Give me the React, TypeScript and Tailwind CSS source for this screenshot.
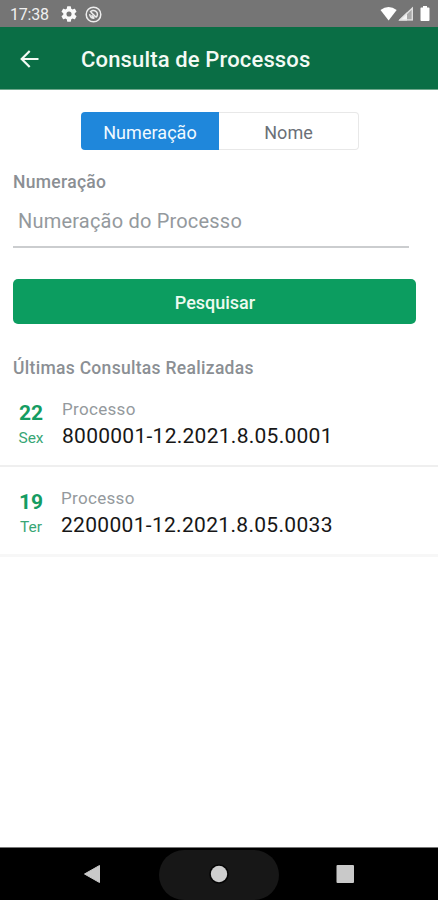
import React from 'react';

type Query = { day: string; weekday: string; number: string; textClass: string; numberClass: string; rowClass: string };

const queries: Query[] = [
  { day: '22', weekday: 'Sex', number: '8000001-12.2021.8.05.0001', textClass: 'ml-[14px]', numberClass: 'tracking-[0.27px]', rowClass: 'h-[78px] border-b-2 border-[#efefef] pt-[9px]' },
  { day: '19', weekday: 'Ter', number: '2200001-12.2021.8.05.0033', textClass: 'ml-[13px]', numberClass: 'tracking-[0.31px]', rowClass: 'h-[90px] border-b-[3px] border-[#f7f7f7] pt-[20px]' },
];

function StatusBar() {
  return (
    <div className="flex h-[27px] shrink-0 items-center bg-[#757575] pt-px text-[#f0f0f0]">
      <span className="ml-[10px] w-[51px] pt-px text-[16px] leading-[26px] tracking-[-0.2px]">17:38</span>
      <svg width="16" height="16" viewBox="2 2 20 20" fill="#fafafa">
        <path d="M19.14 12.94c.04-.3.06-.61.06-.94s-.02-.64-.07-.94l2.03-1.58a.49.49 0 0 0 .12-.61l-1.92-3.32a.49.49 0 0 0-.59-.22l-2.39.96a7 7 0 0 0-1.62-.94l-.36-2.54a.48.48 0 0 0-.48-.41h-3.84a.48.48 0 0 0-.47.41l-.36 2.54c-.59.24-1.13.57-1.62.94l-2.39-.96a.48.48 0 0 0-.59.22L2.74 8.87a.48.48 0 0 0 .12.61l2.03 1.58a6 6 0 0 0 0 1.88l-2.03 1.58a.49.49 0 0 0-.12.61l1.92 3.32c.12.22.37.29.59.22l2.39-.96c.5.38 1.03.7 1.62.94l.36 2.54c.05.24.24.41.48.41h3.84c.24 0 .44-.17.47-.41l.36-2.54c.59-.24 1.13-.56 1.62-.94l2.39.96c.22.08.47 0 .59-.22l1.92-3.32a.48.48 0 0 0-.12-.61zM12 15.2a3.2 3.2 0 1 1 0-6.4 3.2 3.2 0 0 1 0 6.4z" />
      </svg>
      <svg className="ml-2" width="17" height="17" viewBox="0 0 17 17" fill="none" stroke="#ededed">
        <circle cx="8.5" cy="8.5" r="7.3" strokeWidth="1.5" />
        <path d="M5.2 6.2c1-1.8 3.8-2.4 5.7-.9 2 1.6 2 4.5.2 6M4.6 8.2c.3 2.8 2.2 4.2 4.9 3.9M5.8 6l5.3 5.2M6.5 9.2l2.5 2.4" strokeWidth="1.5" />
      </svg>
      <svg className="ml-auto mr-[8px]" width="50" height="16" viewBox="0 0 50 16">
        <path d="M0.5 4Q8.5-2 16.7 4L8.6 14.5Z" fill="#fff" />
        <path d="M18.5 14.5L33 0.5V14.5Z" fill="#a9a9a9" />
        <path d="M18.5 14.5L27 6.3V14.5Z" fill="#f4f4f4" />
        <path d="M20.2 13.8L32.3 2.2V13.8Z" fill="none" stroke="#e2e2e2" strokeWidth="1.3" />
        <path d="M40.5 2.2Q40.5 1.5 41.3 1.5H43V0h4v1.5h1.7q.8 0 .8.7V14q0 1-.8 1h-7.4q-.8 0-.8-1Z" fill="#fff" />
      </svg>
    </div>
  );
}

export default function App() {
  return (
    <div className="flex h-[900px] w-[438px] flex-col overflow-hidden bg-white font-[Roboto,sans-serif]">
      <StatusBar />
      <header className="flex h-[63px] shrink-0 items-center border-b border-[#6fa88c] bg-[#0a6e45] pt-[4px] text-[#f3faf4]">
        <svg className="ml-[20px] mb-[3px]" width="19" height="18" viewBox="0 0 19 18" fill="none" stroke="currentColor" strokeWidth="2.2">
          <path d="M18.5 9H2M9.7 1L1.7 9L9.7 17" />
        </svg>
        <h1 className="ml-[42px] whitespace-nowrap text-[22px] font-medium leading-[28px] tracking-[0.15px]">Consulta de Processos</h1>
      </header>

      <main className="flex flex-1 flex-col pt-[22px]">
        <div className="ml-[81px] flex h-[38px] w-[278px] text-[18px]">
          <button className="w-[138px] rounded-l-[4px] bg-[#1f87db] pt-[2px] tracking-[0.05px] text-[#f1faff]">Numeração</button>
          <button className="flex-1 rounded-r-[4px] border border-l-0 border-[#e8e8e8] bg-white pt-[2px] text-[#6b7077]">Nome</button>
        </div>

        <label className="ml-[13px] mt-[20px] text-[17.5px] font-medium leading-[24px] tracking-[0.3px] text-[#8b8f94]">Numeração</label>
        <div className="ml-[13px] mt-[13px] h-[41px] w-[396px] border-b-2 border-[#cbcdcf] pl-[5px] text-[20px] leading-[28px] tracking-[0.2px] text-[#94999d]">Numeração do Processo</div>

        <button className="ml-[13px] mt-[31px] h-[45px] w-[403px] shrink-0 rounded-[5px] bg-[#0c9d60] pl-px pt-[2px] text-[18px] font-medium text-[#ecfaf0]">Pesquisar</button>

        <h2 className="ml-[13px] mt-[32px] text-[17.5px] font-medium leading-[24px] tracking-[0.3px] text-[#8b8f94]">Últimas Consultas Realizadas</h2>
        <div className="mt-[9px]">
          {queries.map((q) => (
            <div key={q.day} className={`flex ${q.rowClass}`}>
              <div className="ml-[14px] w-[34px] pt-px text-center">
                <div className="text-[21px] font-bold leading-[28px] text-[#159c62]">{q.day}</div>
                <div className="text-[15.5px] leading-[22px] text-[#38a675]">{q.weekday}</div>
              </div>
              <div className={q.textClass}>
                <div className="-mt-px text-[17px] leading-[24px] tracking-[0.32px] text-[#94999d]">Processo</div>
                <div className={`pt-px text-[21px] leading-[28px] text-[#171717] ${q.numberClass}`}>{q.number}</div>
              </div>
            </div>
          ))}
        </div>
      </main>

      <nav className="h-[53px] shrink-0 border-t border-[#777777] bg-black">
        <svg width="438" height="52" viewBox="0 0 438 52">
          <rect x="159" y="2" width="120" height="50" rx="25" fill="#171717" />
          <path d="M99.5 17.5V34.5L84.5 26Z" fill="#c9c9c9" stroke="#c9c9c9" strokeLinejoin="round" />
          <circle cx="219" cy="26" r="9.8" fill="#050505" />
          <circle cx="219" cy="26" r="8.2" fill="#cecece" />
          <rect x="336.5" y="17" width="17.5" height="18" rx="1" fill="#c9c9c9" />
        </svg>
      </nav>
    </div>
  );
}
